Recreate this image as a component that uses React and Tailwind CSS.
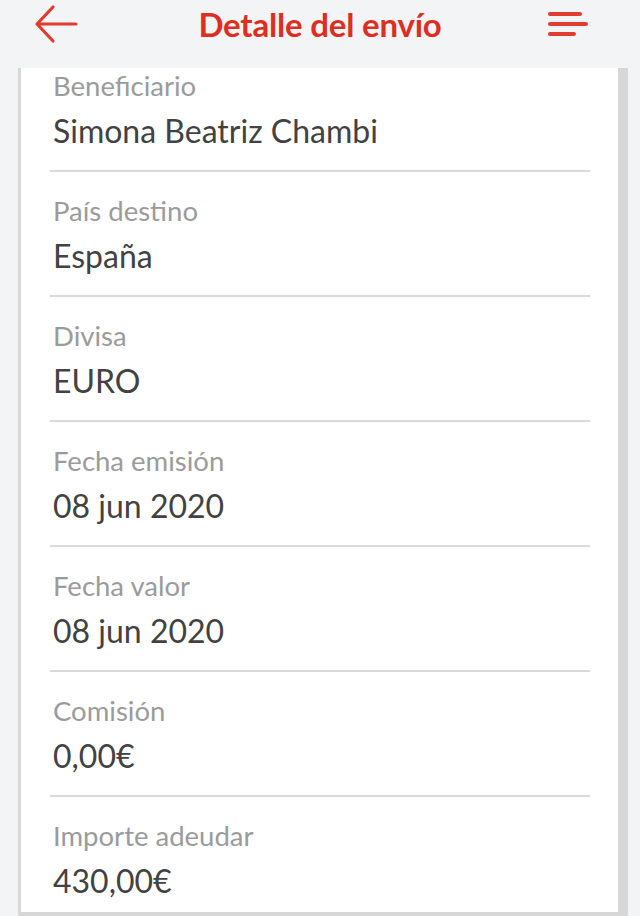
const rows = [
  { label: 'Beneficiario', value: 'Simona Beatriz Chambi' },
  { label: 'País destino', value: 'España' },
  { label: 'Divisa', value: 'EURO' },
  { label: 'Fecha emisión', value: '08 jun 2020' },
  { label: 'Fecha valor', value: '08 jun 2020' },
  { label: 'Comisión', value: '0,00€' },
  { label: 'Importe adeudar', value: '430,00€' },
];

const BackArrow = () => (
  <svg width="44" height="40" viewBox="0 0 44 40" fill="none">
    <path
      d="M42 20H3M19 3L3 20L19 37"
      stroke="#e23b2f"
      strokeWidth="3.2"
      strokeLinecap="round"
      strokeLinejoin="round"
    />
  </svg>
);

const MenuIcon = () => (
  <div className="flex flex-col items-start gap-[6px]">
    <span className="block h-1 w-[34px] rounded-full bg-[#e23b2f]" />
    <span className="block h-1 w-[40px] rounded-full bg-[#e23b2f]" />
    <span className="block h-1 w-[28px] rounded-full bg-[#e23b2f]" />
  </div>
);

export default function App() {
  return (
    <div className="flex h-[916px] w-[640px] flex-col overflow-hidden bg-[#f3f4f6] font-['Lato','Liberation_Sans',sans-serif]">
      <header className="h-[68px] shrink-0">
        <div className="flex h-[48px] items-center">
          <div className="flex w-[100px] pl-[34px]">
            <BackArrow />
          </div>
          <h1 className="flex-1 text-center text-[33px] font-bold leading-[50px] tracking-[-0.2px] text-[#dc2f22]">
            Detalle del envío
          </h1>
          <div className="flex w-[100px] pl-[8px]">
            <MenuIcon />
          </div>
        </div>
      </header>

      <div className="ml-[18px] mr-[12px] flex-1 overflow-hidden border-x-[3px] border-b-4 border-r-[10px] border-[#d7d7d7] bg-white">
        <div className="pl-[29px] pr-[28px]">
          {rows.map((row, i) => (
            <div
              key={row.label}
              className={`border-b-2 border-[#dadada] pb-[21px] ${i === 0 ? 'pt-[3px]' : 'pt-[24px]'}`}
            >
              <p className="pl-[3px] text-[27.5px] leading-[30px] text-[#9b9b9b]">{row.label}</p>
              <p className="mt-3 pl-[3px] text-[32px] leading-[36px] text-[#424242]">{row.value}</p>
            </div>
          ))}
        </div>
      </div>
    </div>
  );
}
